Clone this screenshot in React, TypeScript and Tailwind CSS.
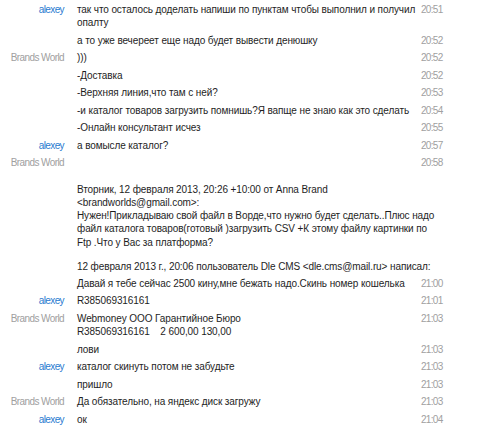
import { FC } from 'react';

type Msg = {
    who?: string;
    lines: string[];
    time?: string;
};

const Head: Msg[] = [
    { who: 'alexey', lines: ['так что осталось доделать напиши по пунктам чтобы выполнил и получил', 'опалту'], time: '20:51' },
    { lines: ['а то уже вечереет еще надо будет вывести денюшку'], time: '20:52' },
    { who: 'Brands World', lines: [')))'], time: '20:52' },
    { lines: ['-Доставка'], time: '20:52' },
    { lines: ['-Верхняя линия,что там с ней?'], time: '20:53' },
    { lines: ['-и каталог товаров загрузить помнишь?Я вапще не знаю как это сделать'], time: '20:54' },
    { lines: ['-Онлайн консультант исчез'], time: '20:55' },
    { who: 'alexey', lines: ['а вомысле каталог?'], time: '20:57' },
];

const Tail: Msg[] = [
    { lines: ['Давай я тебе сейчас 2500 кину,мне бежать надо.Скинь номер кошелька'], time: '21:00' },
    { who: 'alexey', lines: ['R385069316161'], time: '21:01' },
    { who: 'Brands World', lines: ['Webmoney ООО Гарантийное Бюро', 'R385069316161\u00a0\u00a0\u00a0 2 600,00 130,00'], time: '21:03' },
    { lines: ['лови'], time: '21:03' },
    { who: 'alexey', lines: ['каталог скинуть потом не забудьте'], time: '21:03' },
    { lines: ['пришло'], time: '21:03' },
    { who: 'Brands World', lines: ['Да обязательно, на яндекс диск загружу'], time: '21:03' },
    { who: 'alexey', lines: ['ок'], time: '21:04' },
];

const Quote = [
    'Вторник, 12 февраля 2013, 20:26 +10:00 от Anna Brand',
    '<brandworlds@gmail.com>:',
    'Нужен!Прикладываю свой файл в Ворде,что нужно будет сделать..Плюс надо',
    'файл каталога товаров(готовый )загрузить CSV +К этому файлу картинки по',
    'Ftp .Что у Вас за платформа?',
];

const Name: FC<{ who?: string }> = ({ who }) => (
    <div className={`w-[64px] shrink-0 text-right whitespace-nowrap tracking-[-0.6px] ${who === 'alexey' ? 'text-[#2a7bd0]' : 'text-[#a0a0a0]'}`}>
        {who}
    </div>
);

const Time: FC<{ t?: string }> = ({ t }) => (
    <div className="w-[79px] shrink-0 text-[#a0a0a0] tracking-[-0.7px]">{t}</div>
);

const Row: FC<{ m: Msg }> = ({ m }) => (
    <div className="flex py-[2px]">
        <Name who={m.who} />
        <div className="ml-[13px] w-[344px] shrink-0 text-[#1e1e1e] tracking-[-0.1px]">
            {m.lines.map((l, i) => (
                <div key={i} className="whitespace-pre">{l}</div>
            ))}
        </div>
        <Time t={m.time} />
    </div>
);

const App: FC = () => {
    return (
        <div className="w-[500px] h-[429px] overflow-hidden bg-white font-['Liberation_Sans',Arial,sans-serif] text-[10px] leading-[13.5px] pt-[0.5px]">
            {Head.map((m, i) => (
                <Row m={m} key={i} />
            ))}
            <div className="flex py-[2px]">
                <Name who="Brands World" />
                <div className="ml-[13px] w-[344px] shrink-0 text-[#1e1e1e] tracking-[-0.1px] leading-[13.3px] whitespace-pre">
                    <div className="h-[26.6px]"></div>
                    {Quote.map((l, i) => (
                        <div key={i}>{l}</div>
                    ))}
                    <div className="mt-[10.5px]">12 февраля 2013 г., 20:06 пользователь Dle CMS &lt;dle.cms@mail.ru&gt; написал:</div>
                </div>
                <Time t="20:58" />
            </div>
            {Tail.map((m, i) => (
                <Row m={m} key={i} />
            ))}
        </div>
    );
};

export default App;
